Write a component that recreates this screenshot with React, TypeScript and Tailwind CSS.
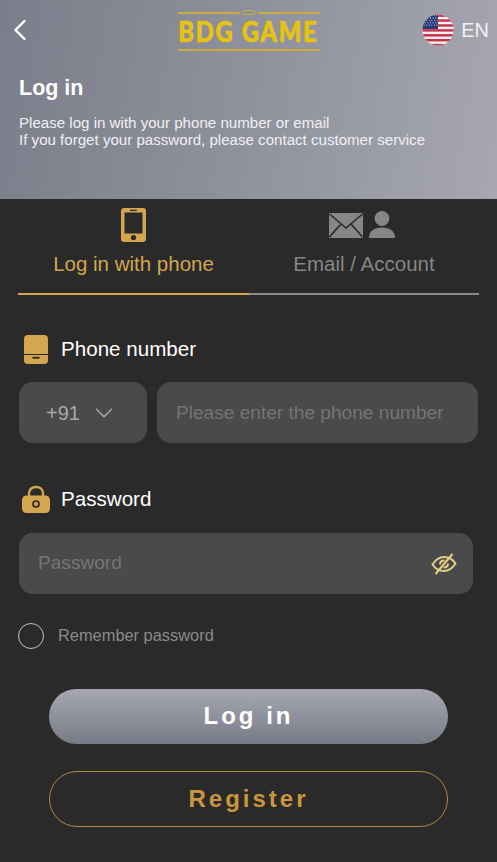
import { ChevronDown, ChevronLeft } from "lucide-react";

const font = "font-['Liberation_Sans',Arial,sans-serif]";

function FlagIcon() {
  const stripes = [0, 2, 4, 6, 8, 10, 12];
  const stars = [];
  for (let r = 0; r < 5; r++) {
    for (let c = 0; c < 6; c++) {
      stars.push(<circle key={`${r}-${c}`} cx={2 + c * 2.6 + (r % 2) * 1.3} cy={1.5 + r * 2.4} r="0.55" fill="#d8dcec" />);
    }
  }
  return (
    <svg viewBox="0 0 32 32" className="h-8 w-8 shrink-0">
      <defs>
        <clipPath id="flag-clip">
          <circle cx="16" cy="16" r="15.6" />
        </clipPath>
      </defs>
      <g clipPath="url(#flag-clip)">
        <rect width="32" height="32" fill="#f2f0f2" />
        {stripes.map((i) => (
          <rect key={i} y={i * 2.46 + 0.4} width="32" height="2.46" fill="#c8324a" />
        ))}
        <rect width="16" height="15" fill="#2b3a78" />
        {stars}
      </g>
    </svg>
  );
}

function Logo() {
  return (
    <div className="flex w-[142px] flex-col items-stretch">
      <div className="flex items-center">
        <span className="h-[2px] flex-1 bg-[#c9ad3c]" />
        <span className="mx-[2px] h-[5px] w-[14px] rounded-full border border-[#c9ad3c]" />
        <span className="h-[2px] flex-1 bg-[#c9ad3c]" />
      </div>
      <div className="mt-[1px] flex justify-center">
        <span className="inline-block shrink-0 origin-center scale-x-[0.82] whitespace-nowrap font-['Lato',sans-serif] text-[29px] leading-[30px] font-black tracking-[2px] text-[#e6c313] [-webkit-text-stroke:0.7px_#e6c313]">
          BDG GAME
        </span>
      </div>
      <div className="mt-[3px] h-[2px] bg-[#c9ad3c]" />
    </div>
  );
}

function PhoneIcon() {
  return (
    <svg viewBox="0 0 25 34" className="h-[34px] w-[25px]">
      <rect x="0" y="0" width="25" height="34" rx="3" fill="#d3a64f" />
      <rect x="3.5" y="4.5" width="18" height="21" fill="#2a2a2a" />
      <rect x="9" y="1.8" width="7" height="1.3" rx="0.6" fill="#2a2a2a" />
      <circle cx="12.5" cy="29.6" r="2.6" fill="#2a2a2a" />
    </svg>
  );
}

function MailUserIcon() {
  return (
    <svg viewBox="0 0 66 28" className="mr-[4px] h-[28px] w-[66px]">
      <rect x="0" y="2" width="34" height="25" rx="1" fill="#868686" />
      <path d="M0.5 3 L17 17 L33.5 3 M0.5 26 L12 13 M33.5 26 L22 13" fill="none" stroke="#2a2a2a" strokeWidth="1.6" />
      <circle cx="53" cy="7.5" r="7.4" fill="#868686" />
      <path d="M40 27 C40 20 45 16.5 53 16.5 C61 16.5 66 20 66 27 Z" fill="#868686" />
    </svg>
  );
}

function SimIcon() {
  return (
    <svg viewBox="0 0 24 29" className="h-[29px] w-6">
      <rect width="24" height="29" rx="4" fill="#d3a64f" />
      <rect y="19" width="24" height="1" fill="#2a2a2a" />
      <rect x="8.5" y="21.8" width="7" height="2" rx="0.5" fill="#3a2f18" />
    </svg>
  );
}

function LockIcon() {
  return (
    <svg viewBox="0 0 28 28" className="h-7 w-7">
      <path d="M7 12 V8.5 C7 4.5 10 2 14 2 C18 2 21 4.5 21 8.5 V12" fill="none" stroke="#d3a64f" strokeWidth="2.4" />
      <rect x="0" y="10.5" width="28" height="17.5" rx="4.5" fill="#d3a64f" />
      <circle cx="14" cy="19" r="3" fill="none" stroke="#2a2a2a" strokeWidth="1.7" />
    </svg>
  );
}

function EyeOffIcon() {
  return (
    <svg viewBox="0 0 26 22" className="h-[22px] w-[26px]" fill="none" stroke="#e3cf85" strokeWidth="2">
      <path d="M1.5 11.5 C5 6 9 4 13 4 C17 4 21.5 6 24.5 10.5 C21 16 17 18 13 18 C9 18 4.5 16 1.5 11.5 Z" />
      <path d="M9 11.5 C9 9 11 7.5 13.5 7.5 M17 10.5 C17 13 15 14.5 12.5 14.5" />
      <path d="M4.5 21 L21.5 1" />
    </svg>
  );
}

export default function App() {
  return (
    <div className={`flex h-[862px] w-[497px] flex-col overflow-hidden bg-[#2a2a2a] ${font}`}>
      <header className="h-[199px] shrink-0 bg-[linear-gradient(100deg,#7b7e8a_0%,#8f919c_50%,#a6a7b1_100%)] text-white">
        <div className="relative flex h-[60px] items-center justify-center">
          <ChevronLeft className="absolute top-[12px] left-[2px] h-9 w-9" strokeWidth={1.6} />
          <div className="pt-[1px]">
            <Logo />
          </div>
          <div className="absolute top-[14px] right-2 flex items-center gap-[7px]">
            <FlagIcon />
            <span className="text-[20px] leading-none text-[#f2f2f4]">EN</span>
          </div>
        </div>
        <div className="px-[19px] pt-[15px]">
          <h1 className="text-[21.5px] leading-[26px] font-bold">Log in</h1>
          <p className="mt-[14px] text-[15.1px] leading-[16.5px] text-[#f0f0f3]">
            Please log in with your phone number or email
            <br />
            If you forget your password, please contact customer service
          </p>
        </div>
      </header>

      <main className="flex flex-1 flex-col">
        <div className="mx-[18px] flex h-[96px] w-[461px]">
          <div className="flex w-[231px] flex-col items-center border-b-2 border-[#d3a64f] pt-[9px]">
            <PhoneIcon />
            <span className="mt-[9px] text-[20.5px] leading-[26px] text-[#d3a64f]">Log in with phone</span>
          </div>
          <div className="flex w-[230px] flex-col items-center border-b-2 border-[#8a8a8a] pt-[12px]">
            <MailUserIcon />
            <span className="mt-[12px] text-[20.5px] leading-[26px] text-[#868686]">Email / Account</span>
          </div>
        </div>

        <div className="mt-[39px] flex h-[30px] items-center pl-6">
          <SimIcon />
          <span className="ml-[13px] text-[20.6px] text-white">Phone number</span>
        </div>
        <div className="mt-[18px] ml-[19px] flex h-[61px] gap-[10px]">
          <div className="flex w-[128px] items-center rounded-[14px] bg-[#4a4a4a] pl-[27px] text-[20px] text-[#a8a8a8]">
            +91
            <ChevronDown className="ml-[9px] h-[30px] w-[30px]" strokeWidth={1.2} />
          </div>
          <div className="flex w-[321px] items-center rounded-[14px] bg-[#4a4a4a] pt-[1px] pl-[19px] text-[19.1px] text-[#747474]">
            Please enter the phone number
          </div>
        </div>

        <div className="mt-[41px] flex h-[30px] items-center pl-[22px]">
          <LockIcon />
          <span className="ml-[11px] text-[20.6px] text-white">Password</span>
        </div>
        <div className="mt-[19px] ml-[19px] flex h-[61px] w-[454px] items-center justify-between rounded-[14px] bg-[#4a4a4a] pr-4 pl-[19px] text-[19.1px] text-[#747474]">
          Password
          <EyeOffIcon />
        </div>

        <div className="mt-[29px] ml-[18px] flex items-center gap-[14px]">
          <span className="h-[26px] w-[26px] rounded-full border border-[#c4c4c4]" />
          <span className="pb-[2px] text-[16.4px] text-[#8a8a8a]">Remember password</span>
        </div>

        <button className="mt-[39px] ml-[49px] h-[55px] w-[399px] rounded-full bg-[linear-gradient(180deg,#a6a7b1_0%,#787b87_100%)] text-[24px] font-bold tracking-[3px] text-white">
          Log in
        </button>
        <button className="mt-[27px] ml-[49px] h-[56px] w-[399px] rounded-full border border-[#b58a3c] text-[24px] font-bold tracking-[3px] text-[#c9963f]">
          Register
        </button>
      </main>
    </div>
  );
}
